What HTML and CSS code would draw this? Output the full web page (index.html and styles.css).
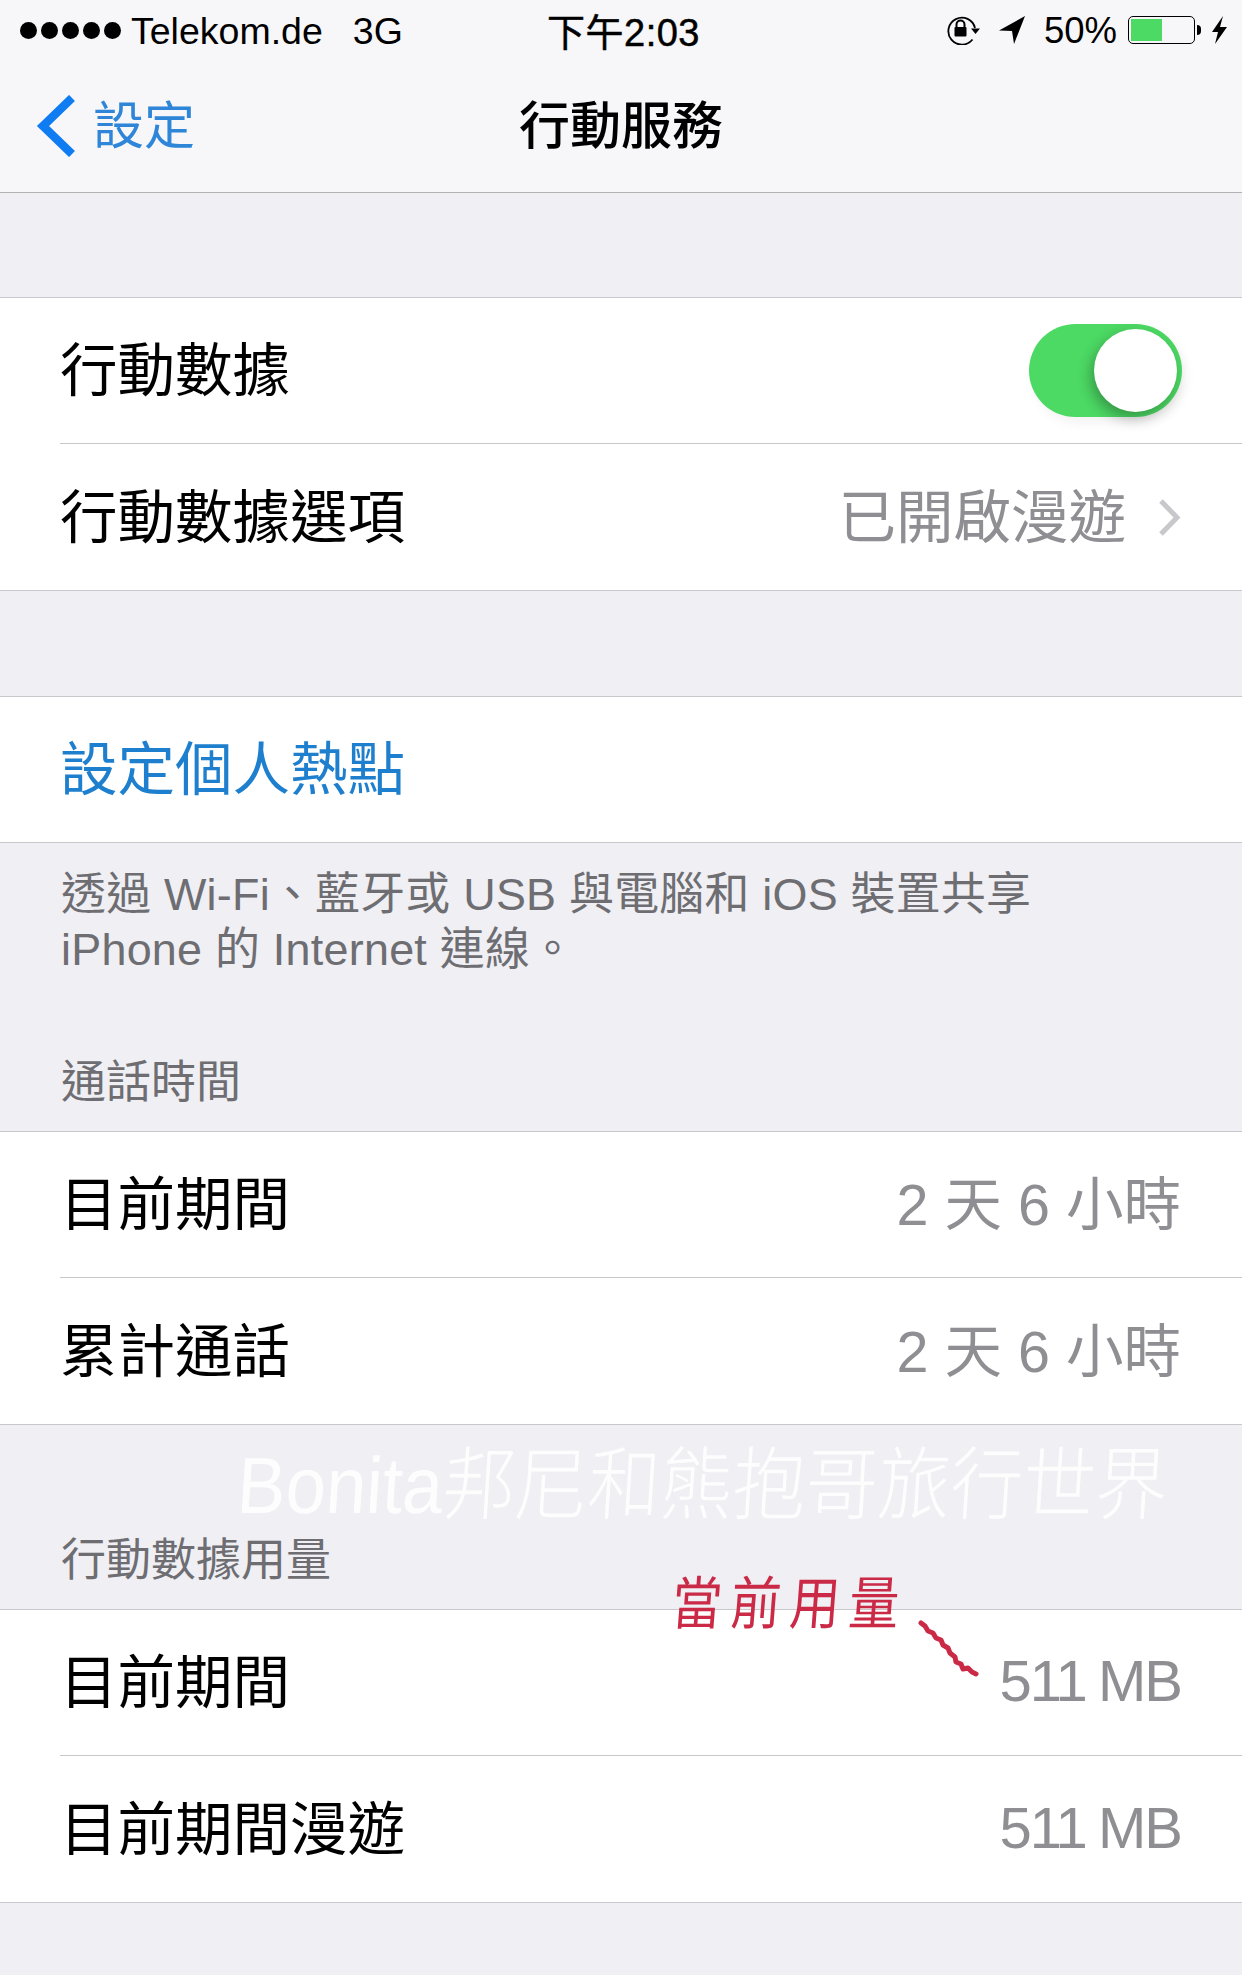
FILE: index.html
```html
<!DOCTYPE html>
<html lang="zh-Hant">
<head>
  <meta charset="UTF-8" />
  <title>行動服務</title>
  <link rel="stylesheet" href="styles.css">
</head>
<body>
  <div class="screen">
    <header class="topbar">
      <div class="status">
        <div class="status-left">
          <div class="signal"><i></i><i></i><i></i><i></i><i></i></div>
          <span class="carrier">Telekom.de</span>
          <span class="network">3G</span>
        </div>
        <div class="clock">下午2:03</div>
        <div class="status-right">
          <!-- rotation lock -->
          <svg class="ico-lock" viewBox="0 0 36 30" width="36" height="30">
            <path d="M30 13A13.500 13.500 0 1 0 27.500 24.500" fill="none" stroke="#000" stroke-width="1.800"/>
            <path d="M26 13.500h9l-4.500 5.500z" fill="#000"/>
            <rect x="9.500" y="12" width="12" height="9.500" rx="1" fill="#000"/>
            <path d="M11.500 12V9.500a4 4 0 0 1 8 0V12" fill="none" stroke="#000" stroke-width="2"/>
          </svg>
          <!-- location arrow -->
          <svg class="ico-loc" viewBox="0 0 26 28" width="26" height="28">
            <path d="M26 0L0 14.500l13 .5 2 13z" fill="#000"/>
          </svg>
          <span class="battery-pct">50%</span>
          <div class="battery"><div class="battery-fill"></div></div>
          <div class="battery-cap"></div>
          <svg class="ico-bolt" viewBox="0 0 15 28" width="15" height="28">
            <path d="M11 0L0 16h6L3 28 15 11H8z" fill="#000"/>
          </svg>
        </div>
      </div>
      <nav class="navbar">
        <div class="back">
          <svg viewBox="0 0 40 62" width="40" height="62">
            <path d="M36 3L7 31l29 28" fill="none" stroke="#0f7cf2" stroke-width="8.500"/>
          </svg>
          <span>設定</span>
        </div>
        <div class="title">行動服務</div>
      </nav>
    </header>

    <section class="group first">
      <div class="row">
        <span class="label">行動數據</span>
        <div class="switch"><div class="knob"></div></div>
      </div>
      <div class="row">
        <span class="label">行動數據選項</span>
        <span class="value roam">已開啟漫遊</span>
        <svg class="chevron" viewBox="0 0 24 39" width="24" height="39">
          <path d="M3 3l16 16.500L3 36" fill="none" stroke="#c7c7cc" stroke-width="5"/>
        </svg>
      </div>
    </section>

    <section class="group hotspot">
      <div class="row"><span class="label link">設定個人熱點</span></div>
    </section>
    <p class="hint">透過 Wi-Fi、藍牙或 USB 與電腦和 iOS 裝置共享<br>iPhone 的 Internet 連線。</p>

    <h2 class="section-head talk">通話時間</h2>
    <section class="group">
      <div class="row">
        <span class="label">目前期間</span>
        <span class="value">2 天 6 小時</span>
      </div>
      <div class="row">
        <span class="label">累計通話</span>
        <span class="value">2 天 6 小時</span>
      </div>
    </section>

    <h2 class="section-head data">行動數據用量</h2>
    <section class="group">
      <div class="row">
        <span class="label">目前期間</span>
        <span class="value mb">511 MB</span>
      </div>
      <div class="row">
        <span class="label">目前期間漫遊</span>
        <span class="value mb">511 MB</span>
      </div>
    </section>

    <!-- handwritten notes on top of the list -->
    <div class="watermark">Bonita邦尼和熊抱哥旅行世界</div>
    <div class="note">當前用量</div>
    <svg class="note-arrow" viewBox="0 0 62 58" width="62" height="58">
      <path d="M3 3L7 6l3 5 5 2 3 5 5 2 2 5 5 3 2 5 5 4 1 5 5 2 2 5 5-1 4 4 4 2" fill="none" stroke="#cb2a47" stroke-width="5" stroke-linecap="round" stroke-linejoin="round"/>
    </svg>
  </div>
</body>
</html>
```

FILE: styles.css
```css
* {
  box-sizing: border-box;
}
body {
  margin: 0;
  background: #efeff4;
  font-family: 'Liberation Sans', 'Noto Sans CJK TC', sans-serif;
  color: #000;
}
.screen {
  position: relative;
  width: 1242px;
  height: 1975px;
  overflow: hidden;
  background: #efeff4;
}

/* top bar */
.topbar {
  height: 193px;
  background: #f7f7f9;
  border-bottom: 1px solid #b2b2b2;
}
.status {
  display: grid;
  grid-template-columns: 1fr auto 1fr;
  align-items: center;
  height: 60px;
  padding: 0 15px 0 20px;
  font-size: 37.500px;
}
.status-left, .status-right {
  display: flex;
  align-items: center;
}
.status-right {
  justify-content: flex-end;
}
.signal {
  display: flex;
  gap: 4px;
  margin-right: 10px;
}
.signal i {
  display: block;
  width: 17px;
  height: 17px;
  border-radius: 50%;
  background: #000;
}
.carrier, .network {
  margin-top: 3px;
}
.network {
  margin-left: 30px;
}
.clock {
  margin-top: -2px;
  font-size: 38px;
  letter-spacing: 0.5px;
  -webkit-text-stroke: 0.5px #000;
}
.ico-loc {
  margin-left: 18px;
}
.battery-pct {
  margin: 2px 0 0 19px;
  font-size: 36.500px;
}
.battery {
  width: 67px;
  height: 28px;
  margin-left: 11px;
  padding: 2px;
  border: 1.5px solid #000;
  border-radius: 5px;
}
.battery-fill {
  width: 31px;
  height: 100%;
  background: #4cd964;
}
.battery-cap {
  width: 4px;
  height: 10px;
  margin-left: 2px;
  background: #000;
  border-radius: 0 4px 4px 0;
}
.ico-bolt {
  margin-left: 11px;
}
.navbar {
  position: relative;
  display: flex;
  align-items: center;
  justify-content: center;
  height: 132px;
  padding-bottom: 8px;
}
.title {
  font-size: 51px;
  font-weight: 500;
}
.back {
  position: absolute;
  left: 36px;
  top: 0;
  bottom: 0;
  display: flex;
  align-items: center;
  gap: 17px;
  font-size: 51px;
  color: #2f86d8;
}
.back span {
  padding-bottom: 8px;
}

/* list groups */
.group {
  background: #fff;
  border-top: 1px solid #c8c7cc;
  border-bottom: 1px solid #c8c7cc;
}
.group.first {
  margin-top: 104px;
}
.group.hotspot {
  margin-top: 105px;
}
.row {
  display: flex;
  align-items: center;
  height: 147px;
  margin-left: 60px;
  padding: 0 60px 9px 0;
  border-top: 1px solid #c8c7cc;
}
.row:first-child {
  height: 145px;
  border-top: 0;
}
.label {
  font-size: 57.500px;
  margin-right: auto;
}
.link {
  color: #1d7fcd;
}
.value {
  margin-right: 1px;
  font-size: 57.500px;
  color: #8e8e93;
}
.value.mb {
  padding-top: 5px;
  font-size: 58px;
  letter-spacing: -2px;
  word-spacing: -2px;
}
.chevron {
  margin-left: 31px;
  margin-top: 9px;
}

/* toggle */
.switch {
  width: 153px;
  height: 93px;
  margin-top: 9px;
  border-radius: 47px;
  background: #4cd964;
  padding: 5px 0 0 65px;
  box-shadow: 4px 6px 12px rgba(0, 0, 0, 0.05);
}
.knob {
  width: 83px;
  height: 83px;
  border-radius: 50%;
  background: #fff;
  box-shadow: -3px 6px 14px rgba(0, 0, 0, 0.3);
}

/* grey text between the groups */
.hint {
  margin: 24px 61px 0;
  font-size: 44.900px;
  letter-spacing: 0.250px;
  line-height: 55px;
  color: #6d6d72;
}
.section-head {
  margin: 0 61px;
  font-size: 45px;
  font-weight: 400;
  line-height: 55px;
  color: #6d6d72;
}
.section-head.talk {
  margin-top: 78px;
  padding-bottom: 21px;
}
.section-head.data {
  margin-top: 108px;
  padding-bottom: 21px;
}

/* notes */
.watermark {
  position: absolute;
  left: 238px;
  top: 1426px;
  font-size: 72.500px;
  font-weight: 300;
  color: #fff;
  opacity: 0.9;
  white-space: nowrap;
  transform-origin: left center;
  transform: scaleY(1.1) skewX(-4deg);
}
.note {
  position: absolute;
  left: 672px;
  top: 1566px;
  font-size: 50px;
  letter-spacing: 9px;
  line-height: 76px;
  color: #cb2a47;
  white-space: nowrap;
  transform-origin: left center;
  transform: scaleY(1.15) skewX(-5deg);
}
.note-arrow {
  position: absolute;
  left: 918px;
  top: 1620px;
}
```
